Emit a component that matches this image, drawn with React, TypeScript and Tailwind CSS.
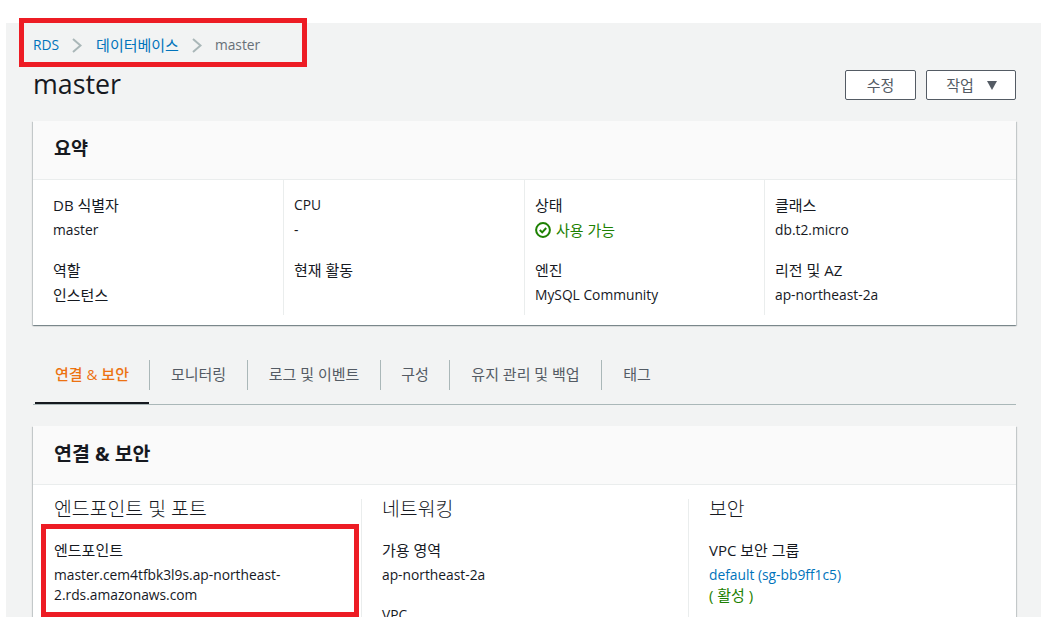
import React from "react";

const fontStack = "font-['Open_Sans','Noto_Sans_CJK_KR',sans-serif]";

// hangul runs wider in the shot than latin, so strings with hangul get the bigger size
const sized = (s: string) => (/[가-힣]/.test(s) ? "text-[15px]" : "text-[13.8px]");

function Field({ label, children, className = "" }: { label: string; children: React.ReactNode; className?: string }) {
  return (
    <div className={className}>
      <div className={`h-[20px] leading-[20px] text-[#16191f] ${sized(label)}`}>{label}</div>
      <div className="mt-[5px] text-[13.8px] leading-[20px] text-[#16191f]">{children}</div>
    </div>
  );
}

const tabs = [
  { label: "연결 & 보안", w: "w-[115px]", active: true },
  { label: "모니터링", w: "w-[98px]" },
  { label: "로그 및 이벤트", w: "w-[133px]" },
  { label: "구성", w: "w-[69px]" },
  { label: "유지 관리 및 백업", w: "w-[152px]" },
  { label: "태그", w: "w-[70px]" },
];

function CheckIcon() {
  return (
    <svg width="16" height="16" viewBox="0 0 16 16" fill="none" className="shrink-0">
      <circle cx="8" cy="8" r="6.9" stroke="#1d8102" strokeWidth="2" />
      <path d="M4.8 8 7.2 10.4 11.2 6" stroke="#1d8102" strokeWidth="2" />
    </svg>
  );
}

function Crumb({ className }: { className: string }) {
  return (
    <svg width="10" height="15" viewBox="0 0 10 15" fill="none" className={`shrink-0 ${className}`}>
      <path d="M1 1 8.5 7.5 1 14" stroke="#aab7b8" strokeWidth="2" />
    </svg>
  );
}

export default function App() {
  return (
    <div className={`relative h-[639px] w-[1055px] overflow-hidden bg-white ${fontStack}`}>
      <div className="ml-[6px] mt-[23px] h-[594px] w-[1035px] overflow-hidden bg-[#f2f3f3] pl-[27px] pr-[25px]">
        {/* breadcrumb */}
        <div className="flex h-[44px] items-center text-[13.8px] leading-[20px]">
          <span className="text-[#0073bb]">RDS</span>
          <Crumb className="ml-[13px] mr-[14px]" />
          <span className="text-[15px] text-[#0073bb]">데이터베이스</span>
          <Crumb className="mx-[13px]" />
          <span className="text-[#687078]">master</span>
        </div>

        {/* title */}
        <div className="flex h-[54px] items-start justify-between">
          <h1 className="-mt-[1px] text-[26.8px] leading-[36px] text-[#16191f]">master</h1>
          <div className="mt-[3px] flex gap-[10px]">
            <button className="h-[30px] w-[71px] rounded-[2px] border border-[#545b64] bg-white text-[15px] text-[#545b64]">수정</button>
            <button className="flex h-[30px] w-[90px] items-center justify-center gap-[12px] rounded-[2px] border border-[#545b64] bg-white pl-[2px] text-[15px] text-[#545b64]">
              작업
              <svg width="12" height="9" viewBox="0 0 12 9"><path d="M1 0h10L6 9z" fill="#545b64" /></svg>
            </button>
          </div>
        </div>

        {/* summary */}
        <section className="h-[204px] bg-white shadow-[0_1px_1px_0_rgba(0,28,36,0.3),1px_1px_1px_0_rgba(0,28,36,0.15),-1px_1px_1px_0_rgba(0,28,36,0.15)]">
          <div className="flex h-[59px] items-center border-b border-[#eaeded] bg-[#fafafa] pb-[4px] pl-[21px]">
            <h2 className="text-[18.5px] font-bold leading-[22px] text-[#16191f]">요약</h2>
          </div>
          <div className="flex h-[145px] pb-[10px]">
            <div className="flex w-[251px] flex-col gap-[20px] border-r border-[#eaeded] pl-[20px] pt-[15px]">
              <Field label="DB 식별자">master</Field>
              <Field label="역할"><span className="text-[15px]">인스턴스</span></Field>
            </div>
            <div className="flex w-[241px] flex-col gap-[20px] border-r border-[#eaeded] pl-[10px] pt-[15px]">
              <Field label="CPU">-</Field>
              <Field label="현재 활동">{" "}</Field>
            </div>
            <div className="flex w-[240px] flex-col gap-[20px] border-r border-[#eaeded] pl-[10px] pt-[15px]">
              <Field label="상태">
                <span className="flex items-center gap-[5px] text-[15px] text-[#1d8102]"><CheckIcon />사용 가능</span>
              </Field>
              <Field label="엔진">MySQL Community</Field>
            </div>
            <div className="flex flex-col gap-[20px] pl-[10px] pt-[15px]">
              <Field label="클래스">db.t2.micro</Field>
              <Field label="리전 및 AZ">ap-northeast-2a</Field>
            </div>
          </div>
        </section>

        {/* tabs */}
        <div className="mt-[35px] flex h-[45px] items-start border-b border-[#aab7b8] pl-[2px]">
          {tabs.map((t, i) => (
            <div key={t.label} className={`flex h-[44px] flex-col justify-between ${t.w}`}>
              <div
                className={`flex h-[30px] w-full items-center justify-center pb-[2px] text-[15px] ${i < tabs.length - 1 ? "border-r border-[#aab7b8]" : ""} ${t.active ? "font-medium text-[#ec7211]" : "text-[#545b64]"}`}
              >
                {t.label}
              </div>
              {t.active && <div className="h-[2px] w-[114px] bg-[#16191f]" />}
            </div>
          ))}
        </div>

        {/* connectivity */}
        <section className="mt-[21px] h-[300px] bg-white shadow-[0_1px_1px_0_rgba(0,28,36,0.3),1px_1px_1px_0_rgba(0,28,36,0.15),-1px_1px_1px_0_rgba(0,28,36,0.15)]">
          <div className="flex h-[59px] items-center border-b border-[#eaeded] bg-[#fafafa] px-[21px] pb-[3px]">
            <h2 className="text-[19.5px] font-bold leading-[22px] text-[#16191f]">연결 &amp; 보안</h2>
          </div>
          <div className="flex h-[200px] pt-[14px]">
            <div className="w-[329px] border-r border-[#eaeded] pl-[21px]">
              <h3 className="text-[19.4px] font-light leading-[20px] text-[#16191f]">엔드포인트 및 포트</h3>
              <Field label="엔드포인트" className="mt-[21px]">
                master.cem4tfbk3l9s.ap-northeast-
                <br />
                2.rds.amazonaws.com
              </Field>
            </div>
            <div className="w-[327px] border-r border-[#eaeded] pl-[20px]">
              <h3 className="text-[19.4px] font-light leading-[20px] text-[#16191f]">네트워킹</h3>
              <Field label="가용 영역" className="mt-[21px]">ap-northeast-2a</Field>
              <Field label="VPC" className="mt-[20px]">{" "}</Field>
            </div>
            <div className="pl-[20px]">
              <h3 className="text-[19.4px] font-light leading-[20px] text-[#16191f]">보안</h3>
              <Field label="VPC 보안 그룹" className="mt-[21px]">
                <span className="text-[#0073bb]">default (sg-bb9ff1c5)</span>
                <br />
                <span className="text-[15px] text-[#1d8102]">( 활성 )</span>
              </Field>
            </div>
          </div>
        </section>
      </div>

      {/* red callouts drawn over the shot */}
      <div className="absolute left-[19px] top-[18px] h-[49px] w-[288px] border-[5px] border-[#ed1c24]" />
      <div className="absolute left-[41px] top-[524px] h-[93px] w-[318px] border-[5px] border-[#ed1c24]" />
    </div>
  );
}
